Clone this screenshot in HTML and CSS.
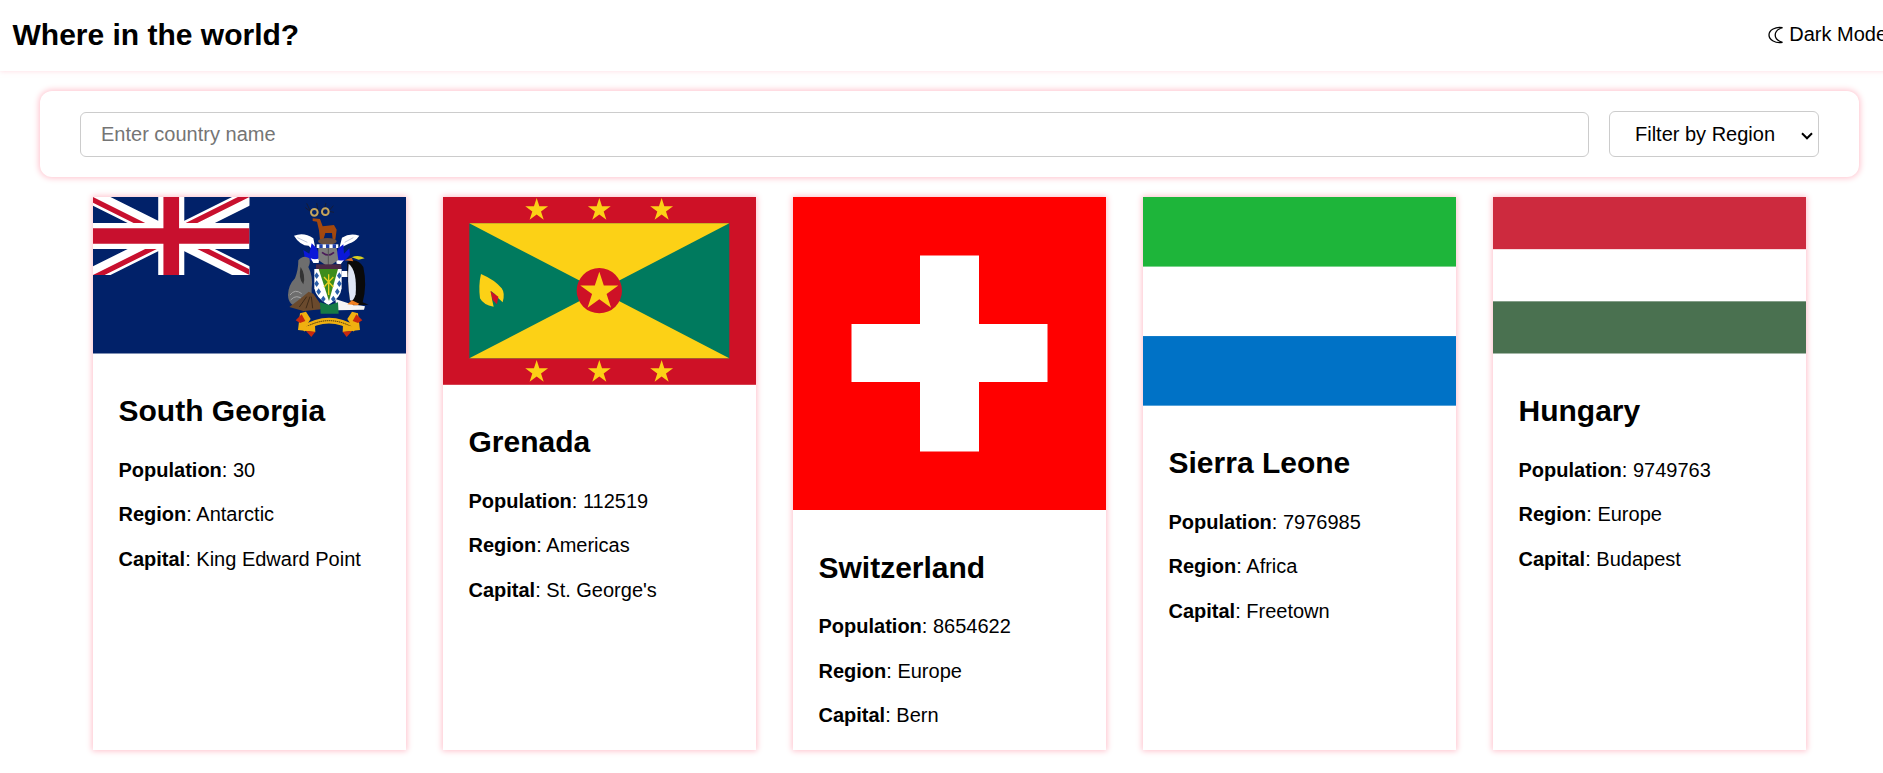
FILE: index.html
```html
<!DOCTYPE html>
<html lang="en">
<head>
<meta charset="utf-8">
<title>Where in the world?</title>
<link rel="stylesheet" href="styles.css">
</head>
<body>
<div class="page">
  <header class="topbar">
    <h1 class="brand">Where in the world?</h1>
    <button class="mode" type="button">
      <svg class="moon" viewBox="0 0 16 18" aria-hidden="true"><path d="M14.500 1.700C7.500.4 1 4 1 9c0 5 6.500 8.600 13.500 7.300C10 15 7.200 12.500 7.200 9c0-3.500 2.800-6 7.300-7.300Z"/></svg>
      <span>Dark Mode</span>
    </button>
  </header>

  <form class="search">
    <input class="search-input" type="text" placeholder="Enter country name">
    <select class="search-select">
      <option>Filter by Region</option>
      <option>Africa</option>
      <option>Americas</option>
      <option>Asia</option>
      <option>Europe</option>
      <option>Oceania</option>
    </select>
  </form>

  <main class="cards">
    <article class="card">
      <svg class="flag" viewBox="0 0 313 156.500" aria-label="Flag of South Georgia">
        <defs>
          <clipPath id="uj"><path d="M30,15h30v15zv15h-30zh-30v-15zv-15h30z"/></clipPath>
        </defs>
        <rect width="313" height="156.500" fill="#012169"/>
        <svg width="156.500" height="78" viewBox="0 0 60 30" preserveAspectRatio="none">
          <path d="M0,0 60,30M60,0 0,30" stroke="#fff" stroke-width="6"/>
          <path d="M0,0 60,30M60,0 0,30" clip-path="url(#uj)" stroke="#c8102e" stroke-width="4"/>
          <path d="M30,0v30M0,15h60" stroke="#fff" stroke-width="10"/>
          <path d="M30,0v30M0,15h60" stroke="#c8102e" stroke-width="6"/>
        </svg>
        <g transform="translate(177 -2) scale(.3333)">
          <path d="M128,62 110,25M122,50 106,38M165,62 190,32M172,48 192,52M147,62 140,24M158,60 168,24" stroke="#1a1a2a" stroke-width="2.500" fill="none"/>
          <circle cx="133" cy="52" r="10" fill="none" stroke="#c4a45c" stroke-width="6"/>
          <circle cx="166" cy="50" r="10" fill="none" stroke="#c4a45c" stroke-width="6"/>
          <path d="M128,70 150,72 158,94 192,90 200,104 196,134 188,134 186,114 166,114 160,134 150,134 147,106 141,80 128,78Z" fill="#a3480e"/>
          <ellipse cx="172" cy="139" rx="28" ry="10" fill="#6a5040"/>
          <path d="M72,122 Q102,110 130,130 L136,160 Q126,166 116,152 Q90,152 72,122Z" fill="#fff"/>
          <path d="M268,122 Q240,112 216,128 L208,160 Q224,152 236,146 Q256,140 268,122Z" fill="#fff"/>
          <path d="M82,128 112,142M250,128 224,142" stroke="#9aa6c4" stroke-width="2"/>
          <path d="M125,145 140,160 150,185 136,200 120,196 104,186 100,165 118,176Z" fill="#0a18d8"/>
          <path d="M220,148 205,160 195,190 210,205 225,196 240,180 238,160 222,176Z" fill="#0a18d8"/>
          <path d="M122,190 Q135,196 148,190 L146,204 130,204Z" fill="#fff"/>
          <path d="M198,192 Q210,200 222,194 L212,208 200,206Z" fill="#fff"/>
          <path d="M145,158H200L205,195 175,216 145,195Z" fill="#7d7d7d"/>
          <path d="M156,172 Q175,188 192,172" fill="none" stroke="#4a1a5a" stroke-width="5"/>
          <path d="M175,160V210" stroke="#555" stroke-width="3"/>
          <rect x="140" y="148" width="65" height="11" fill="#fff"/>
          <path d="M148,153.500h10M168,153.500h10M188,153.500h10" stroke="#1f3fa8" stroke-width="11"/>
          <path d="M85,196 Q100,178 118,190 Q122,205 115,216 Q130,245 125,280 L125,320 90,335 Q55,335 54,300 Q55,270 75,250 Q85,225 85,196Z" fill="#6e6e6e"/>
          <path d="M92,216 Q108,240 100,268 Q84,250 92,216Z" fill="#333"/>
          <path d="M60,300 Q75,280 95,296 M62,315 Q80,295 100,315" fill="none" stroke="#a6a6a6" stroke-width="3"/>
          <path d="M58,336 90,312 116,290 130,296 162,342 100,348Z" fill="#6b4a2d"/>
          <path d="M88,336 110,305M108,340 120,305M128,340 124,305" stroke="#3d2a18" stroke-width="3"/>
          <rect x="138" y="208" width="76" height="14" fill="#4a2a44"/>
          <path d="M133,222H215V280Q212,310 175,330 138,310 133,280Z" fill="#fff"/>
          <path d="M140,232 147,242 140,252 133,242ZM140,256 147,266 140,276 133,266ZM146,280 153,290 146,300 139,290ZM208,232 215,242 208,252 201,242ZM208,256 215,266 208,276 201,266ZM202,280 209,290 202,300 195,290ZM160,302 167,312 160,322 153,312ZM190,302 197,312 190,322 183,312Z" fill="#2a5ea8"/>
          <path d="M146,222H204L177,318Z" fill="#3c8c1c"/>
          <path d="M176,238V300M162,246 190,276M190,246 162,276" stroke="#e8d020" stroke-width="4"/>
          <path d="M215,228H238V246H215Z" fill="#fff"/>
          <path d="M196,312 240,326 285,334 282,344 200,346Z" fill="#f4f4f4"/>
          <path d="M150,322 178,330 204,322 206,356H152Z" fill="#157a45"/>
          <path d="M232,200 Q262,186 280,216 Q292,270 278,322 L296,329 250,331 240,318 Q230,250 232,200Z" fill="#0a0a0a"/>
          <path d="M236,206 Q262,226 257,298 Q250,322 240,316 Q231,260 236,206Z" fill="#dfe6f5"/>
          <path d="M232,328 246,316 268,326 262,331Z" fill="#f08020"/>
          <path d="M224,196 245,188 250,199Z" fill="#d86a20"/>
          <path d="M245,187 Q265,178 284,190 L266,194Z" fill="#d8d020"/>
          <path d="M98,402 Q177,352 256,402" fill="none" stroke="#f0b010" stroke-width="17"/>
          <path d="M98,402 Q177,352 256,402" fill="none" stroke="#3a2a10" stroke-width="3" stroke-dasharray="4 2"/>
          <g id="scrollend">
            <path d="M90,355 108,350 122,372 108,394 135,390 136,412 110,408 84,405Z" fill="#f0b010"/>
            <path d="M77,376 95,358 106,378 90,384Z" fill="#c8290e"/>
            <path d="M108,408 136,410 124,426Z" fill="#c8290e"/>
          </g>
          <use href="#scrollend" transform="translate(354 0) scale(-1 1)"/>
        </g>
      </svg>
      <div class="card-body">
        <h2 class="name">South Georgia</h2>
        <p class="fact"><b>Population</b>: 30</p>
        <p class="fact"><b>Region</b>: Antarctic</p>
        <p class="fact"><b>Capital</b>: King Edward Point</p>
      </div>
    </article>

    <article class="card">
      <svg class="flag" viewBox="0 0 313 187.800" aria-label="Flag of Grenada">
        <defs>
          <polygon id="star" points="0,-1 .2245,-.309 .951,-.309 .363,.118 .588,.809 0,.382 -.588,.809 -.363,.118 -.951,-.309 -.2245,-.309"/>
        </defs>
        <rect width="313" height="187.800" fill="#ce1126"/>
        <g transform="translate(-13 -12) scale(.3333)">
          <rect x="118" y="115" width="780" height="405" fill="#007a5e"/>
          <path d="M118,115H898L118,520H898Z" fill="#fcd116"/>
          <circle cx="508" cy="317" r="68" fill="#ce1126"/>
          <g fill="#fcd116">
            <use href="#star" transform="translate(508 320) scale(60)"/>
            <use href="#star" transform="translate(320 75) scale(36)"/>
            <use href="#star" transform="translate(508 75) scale(36)"/>
            <use href="#star" transform="translate(695 75) scale(36)"/>
            <use href="#star" transform="translate(320 561) scale(36)"/>
            <use href="#star" transform="translate(508 561) scale(36)"/>
            <use href="#star" transform="translate(695 561) scale(36)"/>
            <path d="M153,267 Q145,300 150,340 Q160,360 191,365 Q185,345 183,318 Q195,325 205,340 L218,352 Q226,325 215,310 Q195,285 153,267Z"/>
          </g>
          <path d="M181,318 205,335 201,358 188,345Z" fill="#ce1126"/>
        </g>
      </svg>
      <div class="card-body">
        <h2 class="name">Grenada</h2>
        <p class="fact"><b>Population</b>: 112519</p>
        <p class="fact"><b>Region</b>: Americas</p>
        <p class="fact"><b>Capital</b>: St. George's</p>
      </div>
    </article>

    <article class="card">
      <svg class="flag" viewBox="0 0 313 313" aria-label="Flag of Switzerland">
        <rect width="313" height="313" fill="#f00"/>
        <path d="M127,58.500H186V127H254.500V185H186V254.500H127V185H58.500V127H127Z" fill="#fff"/>
      </svg>
      <div class="card-body">
        <h2 class="name">Switzerland</h2>
        <p class="fact"><b>Population</b>: 8654622</p>
        <p class="fact"><b>Region</b>: Europe</p>
        <p class="fact"><b>Capital</b>: Bern</p>
      </div>
    </article>

    <article class="card">
      <svg class="flag" viewBox="0 0 3 2" preserveAspectRatio="none" aria-label="Flag of Sierra Leone">
        <rect width="3" height="2" fill="#fff"/>
        <rect width="3" height=".667" fill="#1eb53a"/>
        <rect y="1.333" width="3" height=".667" fill="#0072c6"/>
      </svg>
      <div class="card-body">
        <h2 class="name">Sierra Leone</h2>
        <p class="fact"><b>Population</b>: 7976985</p>
        <p class="fact"><b>Region</b>: Africa</p>
        <p class="fact"><b>Capital</b>: Freetown</p>
      </div>
    </article>

    <article class="card">
      <svg class="flag" viewBox="0 0 6 3" aria-label="Flag of Hungary">
        <rect width="6" height="3" fill="#fff"/>
        <rect width="6" height="1" fill="#cd2a3e"/>
        <rect y="2" width="6" height="1" fill="#4a7150"/>
      </svg>
      <div class="card-body">
        <h2 class="name">Hungary</h2>
        <p class="fact"><b>Population</b>: 9749763</p>
        <p class="fact"><b>Region</b>: Europe</p>
        <p class="fact"><b>Capital</b>: Budapest</p>
      </div>
    </article>
  </main>
</div>
</body>
</html>
```

FILE: styles.css
```css
html {
  overflow: hidden;
  background: #fff;
}

body {
  margin: 0;
  font-family: "Liberation Sans", Arial, sans-serif;
  font-size: 20px;
  color: #000;
}

.page {
  width: 1899px;
  padding-bottom: 23px;
}

.topbar {
  display: flex;
  align-items: center;
  justify-content: space-between;
  height: 71px;
  padding: 0 12px 2px 12.5px;
  box-sizing: border-box;
  box-shadow: 0 0 5px rgba(255, 192, 203, 0.6);
}

.brand {
  margin: 0;
  font-size: 30px;
  font-weight: 700;
}

.mode {
  display: flex;
  align-items: center;
  gap: 5px;
  padding: 0;
  border: 0;
  background: none;
  font: inherit;
  color: inherit;
}

.moon {
  width: 16px;
  height: 18px;
  fill: none;
  stroke: #000;
  stroke-width: 1.3;
}

.search {
  display: flex;
  align-items: flex-end;
  gap: 20px;
  height: 86px;
  margin: 20px 40px;
  padding: 0 40px 20px;
  box-sizing: border-box;
  border-radius: 12px;
  background: #fff;
  box-shadow: 0 0 6px 1px #ffc0cb;
}

.search-input {
  flex: 1;
  height: 45px;
  padding: 0 20px;
  box-sizing: border-box;
  border: 1px solid #ccc;
  border-radius: 6px;
  font: inherit;
  color: #000;
  outline: none;
}

.search-input::placeholder {
  color: #757575;
}

.search-select {
  appearance: none;
  width: 210px;
  height: 46px;
  padding: 0 20px 0 25px;
  box-sizing: border-box;
  border: 1px solid #ccc;
  border-radius: 6px;
  background: #fff url("data:image/svg+xml,%3Csvg xmlns='http://www.w3.org/2000/svg' width='12' height='8' viewBox='0 0 12 8'%3E%3Cpath d='M1 1.300l5 5 5-5' fill='none' stroke='%23000' stroke-width='2'/%3E%3C/svg%3E") no-repeat 191px 20px;
  font: inherit;
  color: #000;
}

.cards {
  display: flex;
  justify-content: center;
  gap: 37px;
}

.card {
  width: 313px;
  height: 553px;
  background: #fff;
  box-shadow: 0 0 6px 1px #ffc0cb;
}

.flag {
  display: block;
  width: 100%;
  height: auto;
}

.card-body {
  padding: 25px 25.5px;
}

.name {
  margin: 15.5px 0 30.5px;
  font-size: 30px;
  font-weight: 700;
}

.fact {
  margin: 0 0 21.5px;
}
```
